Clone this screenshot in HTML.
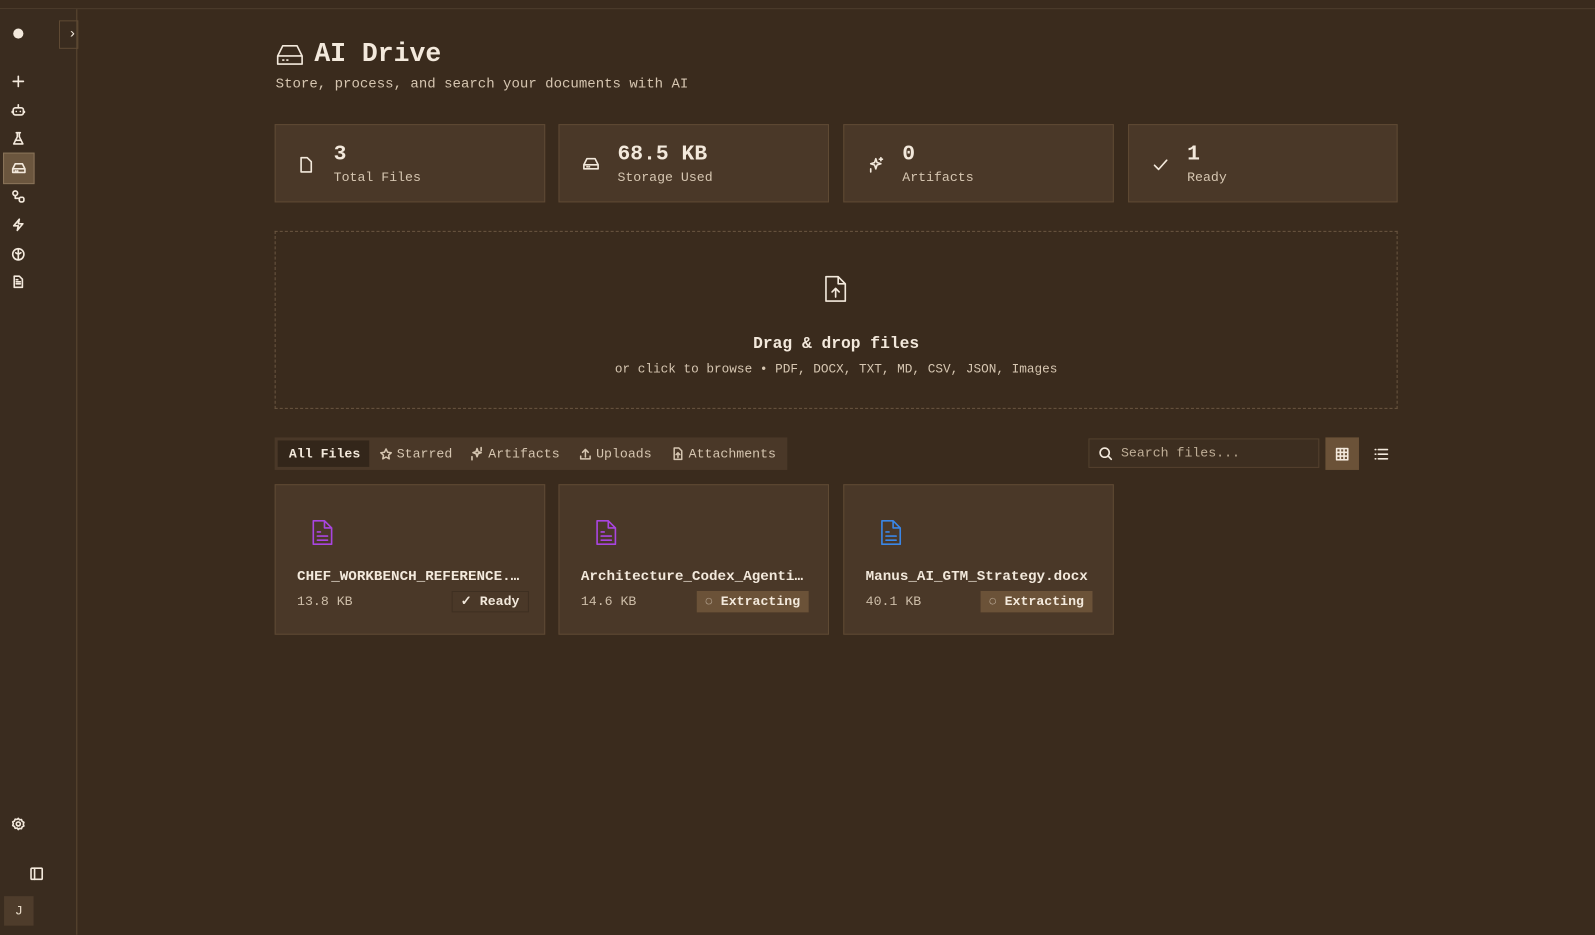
<!DOCTYPE html>
<html><head><meta charset="utf-8"><style>
*{box-sizing:border-box;margin:0;padding:0}
body{width:1595px;height:927px;background:#3a2b1d;font-family:"Liberation Mono",monospace;color:#f3e9dc;overflow:hidden}
#w{position:relative;width:1568px;height:912px;transform:scale(1.0172);transform-origin:0 0}
.top{position:absolute;left:0;top:8px;width:1568px;height:1px;background:#4e3d2c}
.side{position:absolute;left:0;top:9px;width:76px;height:910px;background:#3a2c1f;border-right:1px solid #5c4833}
.ic{position:absolute;left:8px;width:20px;height:20px;display:flex;align-items:center;justify-content:center}
svg{fill:none;stroke:currentColor;stroke-width:1.6;stroke-linecap:round;stroke-linejoin:round}
.card{position:absolute;background:#4a3828;border:1px solid #5f4a34}
.stat .n{position:absolute;left:57px;top:18px;font-size:21px;font-weight:bold}
.stat .l{position:absolute;left:57px;top:44px;font-size:13px;color:#d6c6b1}
.stat svg{position:absolute;left:22px;top:30px}
.tab{position:absolute;top:3px;height:26px;font-size:13px;color:#d6c6b1;display:flex;align-items:center;gap:4px}
.fc .name{position:absolute;left:21px;top:82px;font-size:14px;font-weight:bold;color:#f3e9dc;white-space:nowrap}
.fc .sz{position:absolute;left:21px;top:107px;font-size:13px;color:#cdbda8}
.badge{position:absolute;top:104px;height:21px;font-size:13px;font-weight:bold;display:flex;align-items:center;gap:4px;padding:0 8px}
</style></head><body><div id="w">
<div class="top"></div>
<div class="side">
 <div style="position:absolute;left:13px;top:19px;width:10px;height:10px;border-radius:50%;background:#f3e9dc"></div>
 <div style="position:absolute;left:58px;top:11px;width:19px;height:28px;border:1px solid #5f4a34;color:#f3e9dc;font-size:14px;padding-left:8px;line-height:26px">›</div>
 <div class="ic" style="top:61px"><svg width="14" height="14" viewBox="0 0 14 14"><path d="M7 2v10M2 7h10"/></svg></div>
 <div class="ic" style="top:89px"><svg width="14" height="14" viewBox="0 0 14 14"><rect x="2" y="5" width="10" height="7" rx="2"/><path d="M7 5V2M5 8.5v.1M9 8.5v.1M1 8.5v1M13 8.5v1"/></svg></div>
 <div class="ic" style="top:117px"><svg width="14" height="14" viewBox="0 0 14 14"><path d="M5 1.5h4M6 1.5v4l-3.5 7h9L8 5.5v-4M4 9h6"/></svg></div>
 <div style="position:absolute;left:3px;top:141px;width:31px;height:31px;background:#6b563e;border:1px solid #8a7459"></div>
 <div class="ic" style="top:146px;left:8px"><svg width="15" height="14" viewBox="0 0 15 14"><path d="M1.5 8L4 3h7l2.5 5v3.5h-12zM1.5 8h12M4 10h.5M6 10h.5"/></svg></div>
 <div class="ic" style="top:174px"><svg width="14" height="14" viewBox="0 0 14 14"><circle cx="4" cy="4" r="2.3"/><rect x="8" y="8" width="4.5" height="4.5" rx="1.5"/><path d="M4 6.5v2.5h4"/></svg></div>
 <div class="ic" style="top:202px"><svg width="14" height="14" viewBox="0 0 14 14"><path d="M8 1.5L2.5 8H7l-1 4.5L11.5 6H7z"/></svg></div>
 <div class="ic" style="top:231px"><svg width="14" height="14" viewBox="0 0 14 14"><circle cx="7" cy="7" r="5.5"/><path d="M7 2v10M4.5 5.5L7 7l2.5-1.5"/></svg></div>
 <div class="ic" style="top:258px"><svg width="14" height="14" viewBox="0 0 14 14"><path d="M3 1.5h5l3 3v8H3zM5 7h4M5 9h4M5 5h1.5"/></svg></div>
 <div class="ic" style="top:791px"><svg width="14" height="14" viewBox="0 0 14 14"><circle cx="7" cy="7" r="2"/><path d="M7 1.5l1.2 1.5 1.9-.3.7 1.8 1.7.9-.6 1.8.6 1.8-1.7.9-.7 1.8-1.9-.3L7 12.5l-1.2-1.5-1.9.3-.7-1.8-1.7-.9.6-1.8-.6-1.8 1.7-.9.7-1.8 1.9.3z"/></svg></div>
 <div class="ic" style="top:840px;left:26px"><svg width="14" height="14" viewBox="0 0 14 14"><rect x="1.5" y="1.5" width="11" height="11" rx="1"/><path d="M5 1.5v11"/></svg></div>
 <div style="position:absolute;left:4px;top:872px;width:29px;height:29px;background:#4e3c2b;color:#e6d9c6;font-size:13px;text-align:center;line-height:29px">J</div>
</div>

<svg style="position:absolute;left:271px;top:42px" width="28" height="24" viewBox="0 0 28 24" stroke-width="2.2"><path d="M2 13L7 3h14l5 10v8H2zM2 13h24M7 17h1M11 17h1"/></svg>
<div style="position:absolute;left:309px;top:38px;font-size:26px;font-weight:bold">AI Drive</div>
<div style="position:absolute;left:271px;top:76px;font-size:13.8px;color:#d6c6b1">Store, process, and search your documents with AI</div>

<div class="card stat" style="left:270px;top:122px;width:266px;height:77px"><svg width="16" height="18" viewBox="0 0 16 18"><path d="M3 2h6l4 4v10H3z"/></svg><div class="n">3</div><div class="l">Total Files</div></div>
<div class="card stat" style="left:549px;top:122px;width:266px;height:77px"><svg width="18" height="16" viewBox="0 0 18 16"><path d="M2 9l3-6h8l3 6v4H2zM2 9h14M5 11h.5M7 11h.5"/></svg><div class="n">68.5 KB</div><div class="l">Storage Used</div></div>
<div class="card stat" style="left:829px;top:122px;width:266px;height:77px"><svg width="18" height="18" viewBox="0 0 18 18"><path d="M9 3l1.2 3.8L14 8l-3.8 1.2L9 13l-1.2-3.8L4 8l3.8-1.2zM14 2v3M12.5 3.5h3M4 13v3"/></svg><div class="n">0</div><div class="l">Artifacts</div></div>
<div class="card stat" style="left:1109px;top:122px;width:265px;height:77px"><svg width="18" height="18" viewBox="0 0 18 18"><path d="M3 9.5l4 4 8-9"/></svg><div class="n">1</div><div class="l">Ready</div></div>

<div style="position:absolute;left:270px;top:227px;width:1104px;height:175px;border:1px dashed #6a5640"></div>
<svg style="position:absolute;left:809px;top:270px" width="25" height="29" viewBox="0 0 25 29" stroke-width="2"><path d="M3 2h12l7 7v17H3zM15 2v7h7M12.5 22v-8M9 17l3.5-3.5L16 17"/></svg>
<div style="position:absolute;left:270px;top:329px;width:1104px;text-align:center;font-size:16px;font-weight:bold">Drag &amp; drop files</div>
<div style="position:absolute;left:270px;top:356px;width:1104px;text-align:center;font-size:12.5px;color:#d6c6b1">or click to browse • PDF, DOCX, TXT, MD, CSV, JSON, Images</div>

<div style="position:absolute;left:270px;top:430px;width:504px;height:32px;background:#4a3828">
 <div style="position:absolute;left:3px;top:3px;width:90px;height:26px;background:#33261a"></div>
 <div class="tab" style="left:14px;color:#f3e9dc;font-weight:bold">All Files</div>
 <div class="tab" style="left:103px"><svg width="13" height="13" viewBox="0 0 14 14" stroke-width="1.2"><path d="M7 1.5l1.7 3.5 3.8.5-2.8 2.6.7 3.8L7 10l-3.4 1.9.7-3.8L1.5 5.5l3.8-.5z"/></svg>Starred</div>
 <div class="tab" style="left:192px"><svg width="14" height="14" viewBox="0 0 14 14" stroke-width="1.2"><path d="M7 2l1 3 3 1-3 1-1 3-1-3-3-1 3-1zM2 10v3M11 1v3"/></svg>Artifacts</div>
 <div class="tab" style="left:299px"><svg width="13" height="13" viewBox="0 0 14 14" stroke-width="1.2"><path d="M2 9v3h10V9M7 10V2M4 5l3-3 3 3"/></svg>Uploads</div>
 <div class="tab" style="left:390px"><svg width="13" height="14" viewBox="0 0 14 14" stroke-width="1.2"><path d="M3 1h5l3 3v9H3zM7 11V6M5 8l2-2 2 2"/></svg>Attachments</div>
</div>

<div style="position:absolute;left:1070px;top:431px;width:227px;height:29px;background:#3d2e20;border:1px solid #54412e"></div>
<svg style="position:absolute;left:1080px;top:439px" width="14" height="14" viewBox="0 0 14 14" stroke-width="1.4"><circle cx="6" cy="6" r="4.5"/><path d="M9.5 9.5l3 3"/></svg>
<div style="position:absolute;left:1102px;top:438px;font-size:13px;color:#bfae97">Search files...</div>
<div style="position:absolute;left:1303px;top:430px;width:33px;height:32px;background:#6b5238"></div>
<svg style="position:absolute;left:1313px;top:440px" width="13" height="13" viewBox="0 0 13 13" stroke-width="1.2"><rect x="1" y="1" width="11" height="11"/><path d="M1 4.7h11M1 8.3h11M4.7 1v11M8.3 1v11"/></svg>
<svg style="position:absolute;left:1351px;top:440px" width="14" height="13" viewBox="0 0 14 13" stroke-width="1.3"><path d="M4 2h9M4 6.5h9M4 11h9M1 2h.5M1 6.5h.5M1 11h.5"/></svg>

<div class="card fc" style="left:270px;top:476px;width:266px;height:148px">
 <svg style="position:absolute;left:34px;top:33px;color:#a945e0" width="24" height="28" viewBox="0 0 24 28" stroke-width="2.2"><path d="M3 2h11l7 7v16H3zM14 2v7h7M7 13h3M7 17h10M7 21h10"/></svg>
 <div class="name">CHEF_WORKBENCH_REFERENCE.…</div><div class="sz">13.8 KB</div>
 <div class="badge" style="left:173px;color:#f3e9dc;border:1px solid #3e2f21">✓ Ready</div>
</div>
<div class="card fc" style="left:549px;top:476px;width:266px;height:148px">
 <svg style="position:absolute;left:34px;top:33px;color:#a945e0" width="24" height="28" viewBox="0 0 24 28" stroke-width="2.2"><path d="M3 2h11l7 7v16H3zM14 2v7h7M7 13h3M7 17h10M7 21h10"/></svg>
 <div class="name">Architecture_Codex_Agenti…</div><div class="sz">14.6 KB</div>
 <div class="badge" style="left:135px;background:#6b5238">◌ Extracting</div>
</div>
<div class="card fc" style="left:829px;top:476px;width:266px;height:148px">
 <svg style="position:absolute;left:34px;top:33px;color:#3a86e6" width="24" height="28" viewBox="0 0 24 28" stroke-width="2.2"><path d="M3 2h11l7 7v16H3zM14 2v7h7M7 13h3M7 17h10M7 21h10"/></svg>
 <div class="name">Manus_AI_GTM_Strategy.docx</div><div class="sz">40.1 KB</div>
 <div class="badge" style="left:134px;background:#6b5238">◌ Extracting</div>
</div>
</div></body></html>
